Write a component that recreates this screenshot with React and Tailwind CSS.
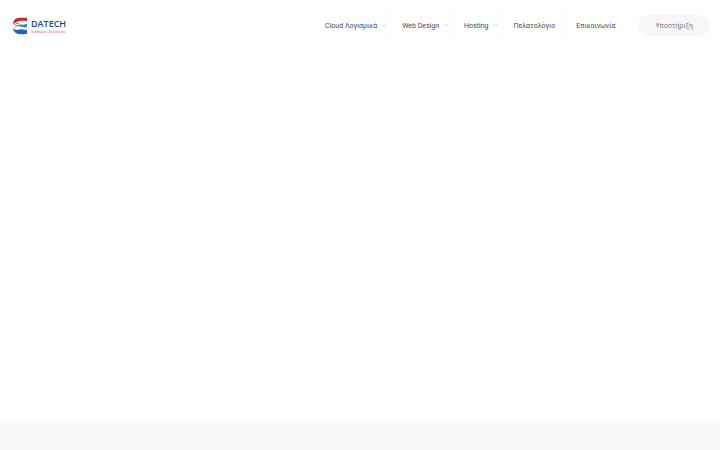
const menuItems = [
  { label: 'Cloud Λογισμικά', href: '#cloud', hasSubmenu: true },
  { label: 'Web Design', href: '#web-design', hasSubmenu: true },
  { label: 'Hosting', href: '#hosting', hasSubmenu: true },
  { label: 'Πελατολόγιο', href: '#clients', hasSubmenu: false },
  { label: 'Επικοινωνία', href: '#contact', hasSubmenu: false }
];

const Logo = () => (
  <a href="#home" className="flex items-center gap-1">
    <svg viewBox="0 0 29 36" className="w-[14px] h-[18px]" aria-hidden="true">
      <path d="M0 15C0 5 6 1 16 1H29V8C22 7 17 7 12 8C7 9 3 11 0 15Z" fill="#c3282d" />
      <path d="M1 18C4 13 8 11 13 11L10 14C7 14 4 15 1 18Z" fill="#d8464b" />
      <path d="M2 22C6 16 12 14 18 15C23 16 26 15 29 13V20C24 22 20 20 15 19C10 18 6 19 2 22Z" fill="#3a80c4" />
      <path d="M0 22C3 26 8 26 13 25C19 24 24 27 29 26V34C24 35 19 35 14 35C6 34 1 30 0 22Z" fill="#2368b0" />
    </svg>
    <span className="flex flex-col font-['Open_Sans',sans-serif]">
      <span className="text-[9px] leading-[11px] font-semibold text-[#174a83]">DATECH</span>
      <span className="text-[4px] leading-[5px] text-[#d3474c]">Software Solutions</span>
    </span>
  </a>
);

const MenuItem = ({ item }) => (
  <li className="flex items-center border-r border-[#fafafa] last:border-r-0">
    <a href={item.href} className="flex items-center gap-[5px] px-[10px] text-[#4a4a4a]">
      {item.label}
      {item.hasSubmenu && (
        <svg viewBox="0 0 5 5" className="w-[5px] h-[5px] -mr-[6px]" fill="none" stroke="#d0d0d0" aria-hidden="true">
          <path d="M0.5 1.7L2.5 2.8L4.5 1.7" />
        </svg>
      )}
    </a>
  </li>
);

const App = () => {
  return (
    <div className="min-h-screen flex flex-col bg-white font-[Roboto,sans-serif] text-[7px] leading-[10px]">
      <header className="flex items-center justify-between pl-[13px] pr-[10px] py-2">
        <Logo />
        <div className="flex items-center gap-[13px]">
          <nav>
            <ul className="flex h-[35px]">
              {menuItems.map((item) => (
                <MenuItem key={item.label} item={item} />
              ))}
            </ul>
          </nav>
          <a href="#support" className="flex items-center h-[21px] px-[17px] rounded-full bg-[#f7f7f7] text-[#7c7c7c]">
            Υποστήριξη
          </a>
        </div>
      </header>

      <main className="flex-1" />

      <footer className="h-[30px] bg-[#f8f8f8]" />
    </div>
  );
};

export default App;
